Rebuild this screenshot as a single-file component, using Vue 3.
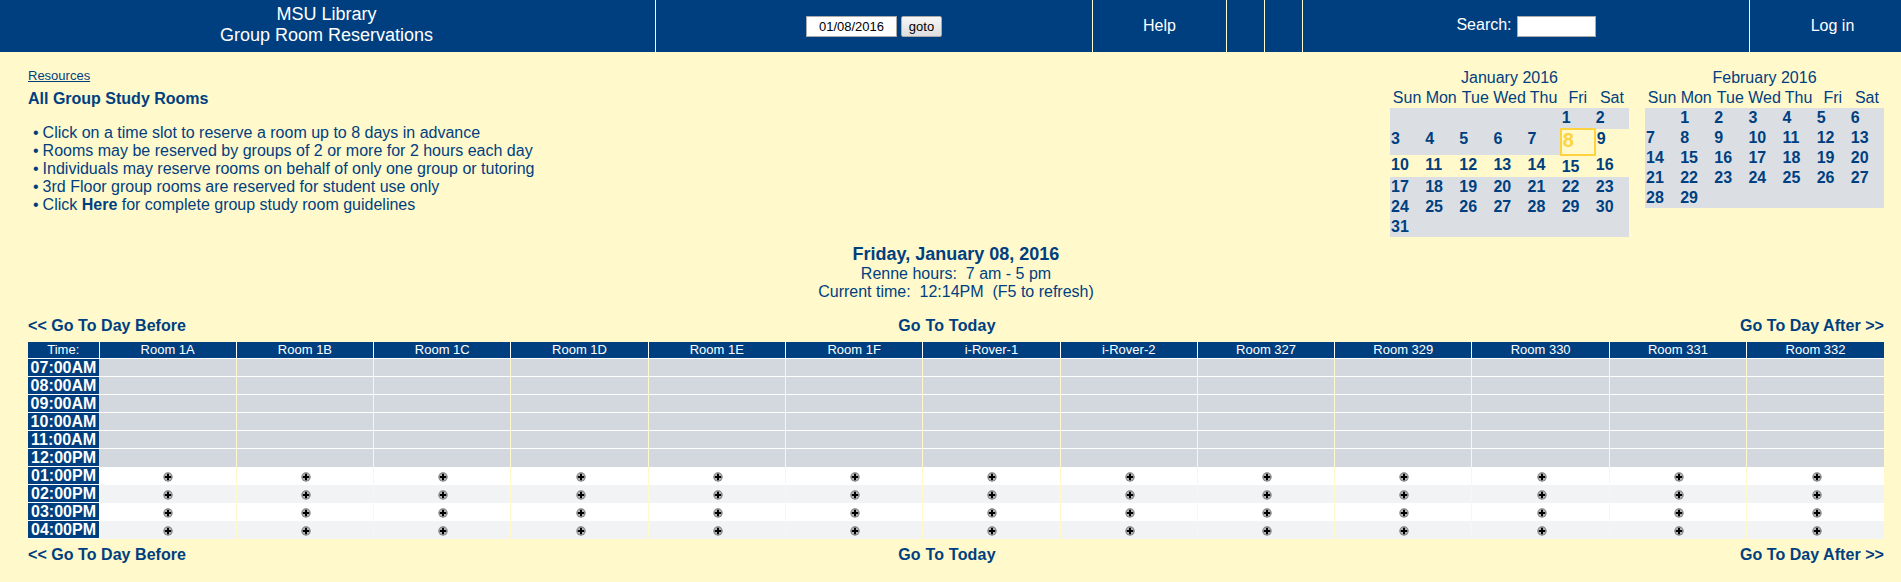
<template>
  <div class="page">
    <!-- top bar -->
    <div class="topbar">
      <div class="bar-cell title">MSU Library<br />Group Room Reservations</div>
      <div class="bar-cell goto-cell">
        <input class="date-input" type="text" value="01/08/2016" />
        <button class="goto-btn">goto</button>
      </div>
      <div class="bar-cell help-cell">Help</div>
      <div class="bar-cell empty-cell"></div>
      <div class="bar-cell empty-cell"></div>
      <div class="bar-cell search-cell">
        <span class="search-label">Search:</span>
        <input class="search-input" type="text" />
      </div>
      <div class="bar-cell login-cell">Log in</div>
    </div>

    <div class="content">
      <div class="intro">
        <div class="guide">
          <a class="resources">Resources</a>
          <h1 class="all-rooms">All Group Study Rooms</h1>
          <ul class="rules">
            <li>Click on a time slot to reserve a room up to 8 days in advance</li>
            <li>Rooms may be reserved by groups of 2 or more for 2 hours each day</li>
            <li>Individuals may reserve rooms on behalf of only one group or tutoring</li>
            <li>3rd Floor group rooms are reserved for student use only</li>
            <li>Click <b>Here</b> for complete group study room guidelines</li>
          </ul>
        </div>

        <div class="calendars">
          <table class="cal">
            <caption>January 2016</caption>
            <thead>
              <tr><th v-for="d in weekdays" :key="d">{{ d }}</th></tr>
            </thead>
            <tbody>
              <tr class="first">
                <td v-for="n in 5" :key="n" class="off"></td>
                <td class="off">1</td>
                <td class="off">2</td>
              </tr>
              <tr class="tall">
                <td v-for="n in [3, 4, 5, 6, 7]" :key="n" class="off">{{ n }}</td>
                <td class="today">8</td>
                <td>9</td>
              </tr>
              <tr class="first">
                <td v-for="n in [10, 11, 12, 13, 14]" :key="n">{{ n }}</td>
                <td class="low">15</td>
                <td>16</td>
              </tr>
              <tr v-for="(week, i) in janRest" :key="i">
                <td v-for="(n, j) in week" :key="j" class="off">{{ n }}</td>
              </tr>
            </tbody>
          </table>

          <table class="cal">
            <caption>February 2016</caption>
            <thead>
              <tr><th v-for="d in weekdays" :key="d">{{ d }}</th></tr>
            </thead>
            <tbody>
              <tr v-for="(week, i) in febWeeks" :key="i">
                <td v-for="(n, j) in week" :key="j" class="off">{{ n }}</td>
              </tr>
            </tbody>
          </table>
        </div>
      </div>

      <div class="day-info">
        <div class="day-name">Friday, January 08, 2016</div>
        <div>Renne hours:&nbsp; 7 am - 5 pm</div>
        <div>Current time:&nbsp; 12:14PM&nbsp; (F5 to refresh)</div>
      </div>

      <div class="day-nav nav-top">
        <a>&lt;&lt; Go To Day Before</a>
        <a class="today-link">Go To Today</a>
        <a class="after-link">Go To Day After &gt;&gt;</a>
      </div>

      <table class="rooms">
        <thead>
          <tr>
            <th class="time-head">Time:</th>
            <th v-for="room in rooms" :key="room">{{ room }}</th>
          </tr>
        </thead>
        <tbody>
          <tr v-for="slot in slots" :key="slot.time" :class="slot.kind">
            <th class="time">{{ slot.time }}</th>
            <td v-for="room in rooms" :key="room">
              <svg v-if="slot.kind !== 'closed'" class="add" width="10" height="10" viewBox="0 0 10 10">
                <circle cx="5" cy="5" r="4.7" fill="#7d7d7d" />
                <circle cx="5" cy="5" r="3.7" fill="#b4b4b4" />
                <path d="M4 1.800h2V4h2.200v2H6v2.200H4V6H1.800V4H4z" fill="#000" />
              </svg>
            </td>
          </tr>
        </tbody>
      </table>

      <div class="day-nav nav-bottom">
        <a>&lt;&lt; Go To Day Before</a>
        <a class="today-link">Go To Today</a>
        <a class="after-link">Go To Day After &gt;&gt;</a>
      </div>
    </div>
  </div>
</template>

<script setup>
const weekdays = ["Sun", "Mon", "Tue", "Wed", "Thu", "Fri", "Sat"];

const janRest = [
  [17, 18, 19, 20, 21, 22, 23],
  [24, 25, 26, 27, 28, 29, 30],
  [31, "", "", "", "", "", ""],
];

const febWeeks = [
  ["", 1, 2, 3, 4, 5, 6],
  [7, 8, 9, 10, 11, 12, 13],
  [14, 15, 16, 17, 18, 19, 20],
  [21, 22, 23, 24, 25, 26, 27],
  [28, 29, "", "", "", "", ""],
];

const rooms = [
  "Room 1A",
  "Room 1B",
  "Room 1C",
  "Room 1D",
  "Room 1E",
  "Room 1F",
  "i-Rover-1",
  "i-Rover-2",
  "Room 327",
  "Room 329",
  "Room 330",
  "Room 331",
  "Room 332",
];

const slots = [
  { time: "07:00AM", kind: "closed" },
  { time: "08:00AM", kind: "closed" },
  { time: "09:00AM", kind: "closed" },
  { time: "10:00AM", kind: "closed" },
  { time: "11:00AM", kind: "closed" },
  { time: "12:00PM", kind: "closed" },
  { time: "01:00PM", kind: "open" },
  { time: "02:00PM", kind: "open alt" },
  { time: "03:00PM", kind: "open" },
  { time: "04:00PM", kind: "open alt" },
];
</script>

<style>
html,
body {
  margin: 0;
  background: #fff9cc;
}
</style>

<style scoped>
* {
  box-sizing: border-box;
}

.page {
  min-height: 582px;
  background: #fff9cc;
  color: #003f7f;
  font-family: "Liberation Sans", Arial, sans-serif;
  font-size: 16px;
  line-height: 18px;
}

/* top bar */
.topbar {
  display: flex;
  height: 52px;
  background: #003f7f;
  color: #fff;
}

.bar-cell {
  display: flex;
  align-items: center;
  justify-content: center;
  border-right: 1px solid #fff9cc;
}

.title {
  width: 656px;
  padding: 0 2px 2px 0;
  text-align: center;
  font-size: 18px;
  line-height: 21px;
}

.goto-cell {
  width: 437px;
  gap: 4px;
}

.date-input {
  width: 91px;
  height: 21px;
  padding: 0;
  border: 1px solid #aaa;
  background: #fff;
  color: #000;
  font: 13px "Liberation Sans", Arial, sans-serif;
  text-align: center;
}

.goto-btn {
  width: 41px;
  height: 21px;
  padding: 0;
  border: 1px solid #aaa;
  border-radius: 2px;
  background: linear-gradient(#f6f6f6, #dedede);
  color: #000;
  font: 13px "Liberation Sans", Arial, sans-serif;
}

.help-cell {
  width: 134px;
}

.empty-cell {
  width: 38px;
}

.search-cell {
  width: 447px;
  gap: 5px;
}

.search-label {
  padding-bottom: 2px;
}

.search-input {
  width: 79px;
  height: 21px;
  padding: 0;
  border: 1px solid #aaa;
  background: #fff;
}

.login-cell {
  flex: 1;
  padding-left: 14px;
  border-right: 0;
}

/* main */
.content {
  padding: 16px 17px 0 28px;
}

.intro {
  display: flex;
  justify-content: space-between;
  height: 177px;
}

.resources {
  display: block;
  font-size: 13px;
  line-height: 16px;
  text-decoration: underline;
}

.all-rooms {
  margin: 6px 0 0;
  font-size: 16px;
  line-height: 18px;
}

.rules {
  margin: 16px 0 0;
  padding: 0 0 0 5px;
  list-style: none;
}

.rules li::before {
  content: "\2022";
  margin-right: 4px;
}

.calendars {
  display: flex;
  gap: 16px;
}

.cal {
  width: 239px;
  border-collapse: collapse;
  table-layout: fixed;
  align-self: flex-start;
}

.cal caption {
  height: 20px;
  line-height: 19px;
  text-align: center;
}

.cal th {
  height: 20px;
  padding: 0;
  font-weight: 400;
  line-height: 20px;
  text-align: center;
}

.cal td {
  height: 20px;
  padding: 0 1px;
  font-weight: 700;
  line-height: 20px;
  vertical-align: top;
}

.cal .off {
  background: #dbdfe4;
}

.cal .first td {
  height: 21px;
}

.cal .tall td {
  height: 26px;
}

.cal .today {
  padding-top: 0;
  border: 2px solid #ffd33d;
  color: #ffd33d;
  font-size: 20px;
}

.cal .first .low {
  padding-top: 1px;
}

.day-info {
  text-align: center;
}

.day-name {
  margin-bottom: 2px;
  font-size: 18px;
  font-weight: 700;
  line-height: 18px;
}

.day-nav {
  display: grid;
  grid-template-columns: 1fr auto 1fr;
  font-weight: 700;
  letter-spacing: 0.05px;
}

.today-link {
  margin-right: 18px;
  letter-spacing: 0.2px;
}

.after-link {
  text-align: right;
}

.nav-top {
  margin-top: 16px;
}

.nav-bottom {
  margin-top: 7px;
}

/* room grid */
.rooms {
  width: 1856px;
  margin-top: 7px;
  border-collapse: collapse;
  table-layout: fixed;
}

.rooms th,
.rooms td {
  height: 18px;
  padding: 0;
  text-align: center;
  line-height: 16px;
}

.rooms thead th {
  height: 16px;
  border-right: 1px solid #fff;
  border-bottom: 1px solid #fff;
  background: #003f7f;
  color: #fff;
  font-size: 13px;
  font-weight: 400;
}

.rooms thead th:last-child {
  border-right: 0;
}

.rooms .time-head {
  width: 71px;
}

.rooms .time {
  border-bottom: 1px solid #fff;
  background: #003f7f;
  color: #fff;
  font-size: 16px;
  font-weight: 700;
}

.rooms td {
  border-right: 1px solid #fff9cc;
}

.rooms td:last-child {
  border-right: 0;
}

.rooms .closed td {
  border-bottom: 1px solid #fff;
  background: #d2d8de;
}

.rooms .closed:nth-child(6) td {
  border-bottom: 0;
}

.rooms .open td {
  padding: 2px 0 0 2px;
  background: #fff;
}

.rooms .alt td {
  background: #f2f3f5;
}

.add {
  display: block;
  margin: 0 auto;
}
</style>
